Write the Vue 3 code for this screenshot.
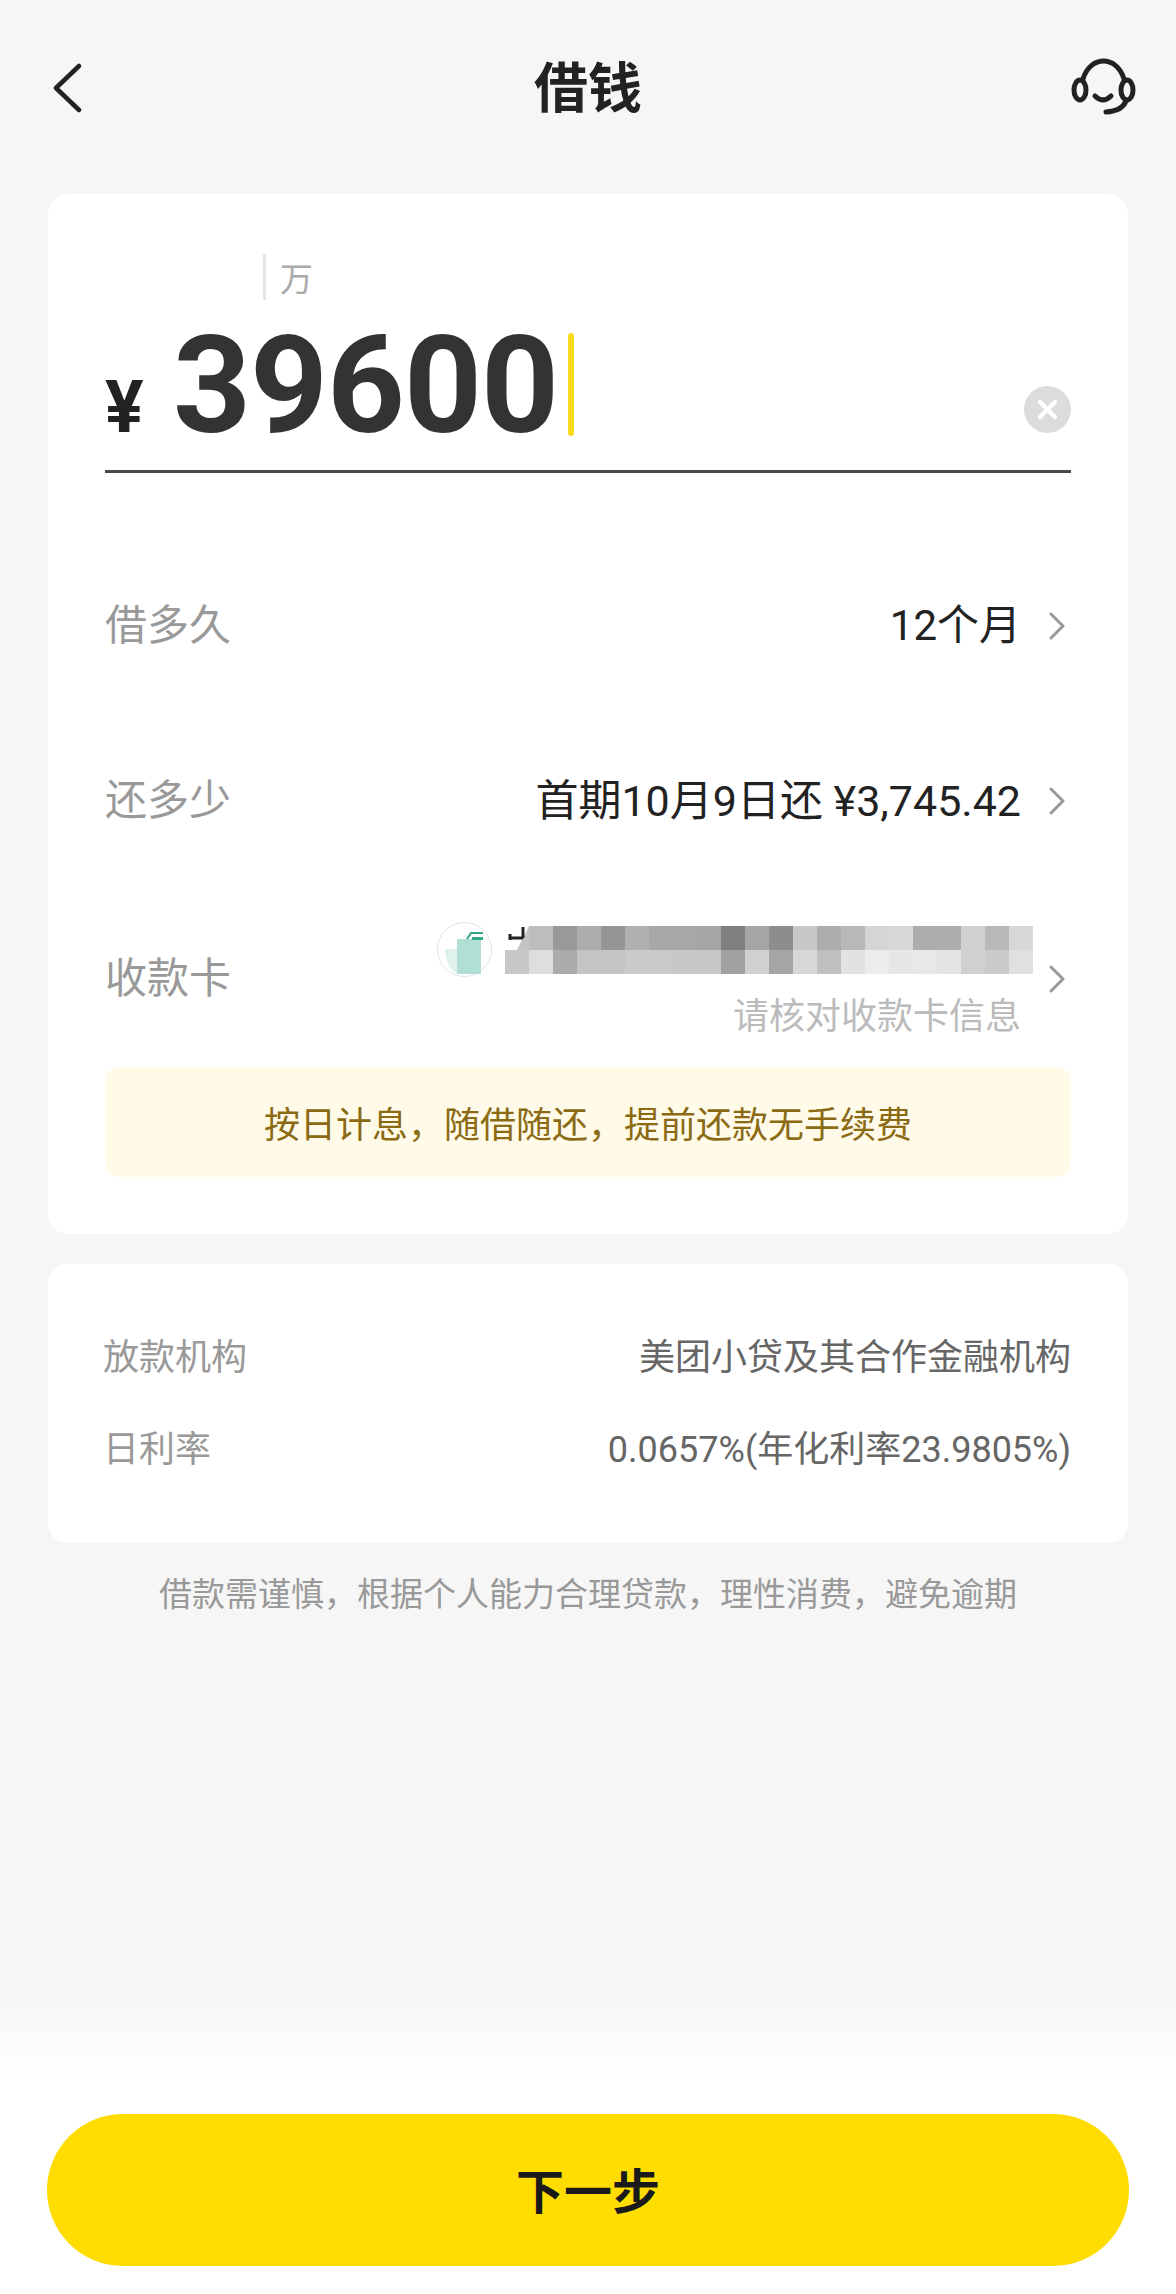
<template>
  <div class="page">
    <div class="main">
      <div class="nav">
        <svg class="back" width="30" height="50" viewBox="0 0 30 50">
          <path d="M27 3 L4 25 L27 47" fill="none" stroke="#222" stroke-width="4.5" stroke-linecap="round" stroke-linejoin="round" />
        </svg>
        <div class="title">借钱</div>
        <svg class="service" width="68" height="68" viewBox="0 0 68 68">
          <g fill="none" stroke="#222" stroke-width="5" stroke-linecap="round">
            <path d="M13 25 C17 12 26 7 33.5 7 C41 7 50 12 54 25" />
            <ellipse cx="10" cy="36" rx="6" ry="10" />
            <ellipse cx="57" cy="36" rx="6" ry="10" />
            <path d="M25 42 Q33 50 41 42" />
            <path d="M56 47 Q52 57 36 58" />
          </g>
        </svg>
      </div>

      <div class="card card-main">
        <div class="hint">
          <span class="hint-line"></span>
          <span class="hint-text">万</span>
        </div>
        <div class="amount">
          <div class="amount-value">
            <span class="yen">¥</span>
            <span class="digits">39600</span>
          </div>
          <span class="caret"></span>
          <svg class="clear" width="47" height="47" viewBox="0 0 47 47">
            <circle cx="23.5" cy="23.5" r="23.5" fill="#dcdcdc" />
            <path d="M16 16 L31 31 M31 16 L16 31" stroke="#fff" stroke-width="4.5" stroke-linecap="round" />
          </svg>
        </div>

        <div class="rows">
          <div class="row">
            <span class="row-label">借多久</span>
            <span class="row-value row-value-short">12个月</span>
            <svg class="chevron" width="16" height="28" viewBox="0 0 16 28">
              <path d="M2 2 L14 14 L2 26" fill="none" stroke="#999" stroke-width="3" stroke-linecap="round" stroke-linejoin="round" />
            </svg>
          </div>
          <div class="row">
            <span class="row-label">还多少</span>
            <span class="row-value">首期10月9日还 ¥3,745.42</span>
            <svg class="chevron" width="16" height="28" viewBox="0 0 16 28">
              <path d="M2 2 L14 14 L2 26" fill="none" stroke="#999" stroke-width="3" stroke-linecap="round" stroke-linejoin="round" />
            </svg>
          </div>
          <div class="row row-bank">
            <span class="row-label">收款卡</span>
            <div class="bank">
              <div class="bank-line">
                <svg class="bank-logo" width="55" height="55" viewBox="0 0 55 55">
                  <circle cx="27.5" cy="27.5" r="27" fill="#fff" stroke="#dfe5e3" />
                  <path d="M8 27 H20 V52 Q9 46 8 27 Z" fill="#dff2ed" />
                  <rect x="20" y="17" width="24" height="35" fill="#b2dfd3" />
                  <path d="M30 17 L34 11 H46" fill="none" stroke="#35a58b" stroke-width="2" />
                  <rect x="35" y="15" width="11" height="3" fill="#35a58b" />
                </svg>
                <div class="mosaic">
                  <span
                    v-for="(c, i) in mosaic"
                    :key="i"
                    class="mosaic-cell"
                    :style="{ background: c }"
                  ></span>
                  <svg class="mosaic-glyph" width="24" height="24" viewBox="0 0 24 24">
                    <path d="M0 0 H24 L12 24 H0 Z" fill="#fff" />
                    <path d="M5 14 V8 M5 12 H18 M18 1 V12" fill="none" stroke="#222" stroke-width="3" />
                  </svg>
                </div>
              </div>
              <div class="bank-note">请核对收款卡信息</div>
            </div>
            <svg class="chevron" width="16" height="28" viewBox="0 0 16 28">
              <path d="M2 2 L14 14 L2 26" fill="none" stroke="#999" stroke-width="3" stroke-linecap="round" stroke-linejoin="round" />
            </svg>
          </div>
        </div>

        <div class="notice">按日计息，随借随还，提前还款无手续费</div>
      </div>

      <div class="card card-info">
        <div class="info-row">
          <span class="info-label">放款机构</span>
          <span class="info-value">美团小贷及其合作金融机构</span>
        </div>
        <div class="info-row">
          <span class="info-label">日利率</span>
          <span class="info-value">0.0657%(年化利率23.9805%)</span>
        </div>
      </div>

      <div class="tip">借款需谨慎，根据个人能力合理贷款，理性消费，避免逾期</div>
    </div>

    <div class="footer">
      <button class="next">下一步</button>
    </div>
  </div>
</template>

<script setup>
const row1 = ['#c4c4c4', '#bdbdbd', '#999999', '#adadad', '#959595', '#b0b0b0', '#a8a8a8', '#a8a8a8', '#a5a5a5', '#7f7f7f', '#a5a5a5', '#8d8d8d', '#c8c8c8', '#adadad', '#b8b8b8', '#d5d5d5', '#d8d8d8', '#adadad', '#adadad', '#d0d0d0', '#b8b8b8', '#d8d8d8']
const row2 = ['#c8c8c8', '#dedede', '#ababab', '#c4c4c4', '#c4c4c4', '#cacaca', '#cacaca', '#c8c8c8', '#c8c8c8', '#a0a0a0', '#d0d0d0', '#a5a5a5', '#d8d8d8', '#c0c0c0', '#e2e2e2', '#ececec', '#e6e6e6', '#e8e8e8', '#e4e4e4', '#d0d0d0', '#cacaca', '#e0e0e0']
const mosaic = [...row1, ...row2]
</script>

<style>
html, body {
  margin: 0;
  background: #f6f6f6;
}
</style>

<style scoped>
.page {
  width: 1176px;
  height: 2294px;
  display: flex;
  flex-direction: column;
  background: #f6f6f6;
  font-family: Roboto, "Noto Sans CJK SC", sans-serif;
  overflow: hidden;
}
.main {
  flex: 1;
}
.nav {
  height: 175px;
  padding: 0 38px;
  display: grid;
  grid-template-columns: 1fr auto 1fr;
  align-items: center;
  box-sizing: border-box;
}
.back {
  margin-left: 14px;
}
.service {
  justify-self: end;
}
.title {
  margin-bottom: 6px;
  font-size: 54px;
  font-weight: 700;
  color: #222;
}
.card {
  margin: 0 48px;
  background: #fff;
  border-radius: 20px;
}
.card-main {
  margin-top: 19px;
  padding: 60px 57px 57px;
}
.hint {
  height: 46px;
  padding-left: 158px;
  display: flex;
  align-items: center;
}
.hint-line {
  width: 3px;
  height: 46px;
  background: #e4e4e4;
}
.hint-text {
  margin-left: 14px;
  font-size: 33px;
  color: #aaa;
}
.amount {
  height: 173px;
  box-sizing: border-box;
  padding-bottom: 34px;
  border-bottom: 3px solid #4a4a4a;
  display: flex;
  align-items: flex-end;
}
.amount-value {
  display: flex;
  align-items: baseline;
  height: 100px;
  line-height: 100px;
}
.yen {
  width: 68px;
  font-size: 72px;
  font-weight: 700;
  color: #222;
}
.digits {
  font-size: 136px;
  font-weight: 700;
  letter-spacing: -1px;
  color: #333;
}
.caret {
  width: 6px;
  height: 103px;
  margin-left: 10px;
  border-radius: 3px;
  background: #f7dc1c;
}
.clear {
  margin-left: auto;
  margin-bottom: 3px;
}
.rows {
  margin-top: 63px;
}
.row {
  height: 175px;
  display: flex;
  align-items: center;
}
.row-label {
  margin-bottom: 4px;
  font-size: 42px;
  color: #999;
}
.row-value {
  margin-left: auto;
  margin-bottom: 4px;
  font-size: 43px;
  color: #222;
}
.row-value-short {
  font-size: 42px;
}
.chevron {
  margin-left: 28px;
  margin-right: 6px;
  margin-top: 4px;
  flex-shrink: 0;
}
.row-bank {
  height: 181px;
}
.bank {
  margin-left: auto;
  margin-top: 6px;
  display: flex;
  flex-direction: column;
  align-items: flex-end;
}
.bank-line {
  display: flex;
  align-items: center;
  margin-right: -12px;
}
.bank-logo {
  margin-right: 13px;
}
.mosaic {
  position: relative;
  display: grid;
  grid-template-columns: repeat(22, 24px);
  grid-auto-rows: 24px;
}
.mosaic-glyph {
  position: absolute;
  left: 0;
  top: 0;
}
.bank-note {
  margin-top: 20px;
  font-size: 36px;
  line-height: 40px;
  color: #bbb;
}
.notice {
  height: 110px;
  border-radius: 14px;
  background: #fffbe8;
  color: #8c6a14;
  font-size: 36px;
  display: flex;
  align-items: center;
  justify-content: center;
}
.card-info {
  margin-top: 30px;
  padding: 44px 57px 51px 55px;
}
.info-row {
  height: 92px;
  display: flex;
  align-items: center;
  justify-content: space-between;
}
.info-label {
  font-size: 36px;
  color: #999;
}
.info-value {
  font-size: 36px;
  color: #666;
}
.tip {
  margin-top: 29px;
  line-height: 46px;
  font-size: 33px;
  color: #999;
  text-align: center;
}
.footer {
  height: 300px;
  box-sizing: border-box;
  padding: 120px 47px 28px;
  background: linear-gradient(#f6f6f6, #fff 30%);
}
.next {
  display: block;
  width: 100%;
  height: 152px;
  padding: 0 0 4px;
  border: none;
  border-radius: 76px;
  background: #ffdd00;
  color: #1a1a1a;
  font-family: inherit;
  font-size: 48px;
  font-weight: 700;
}
</style>
